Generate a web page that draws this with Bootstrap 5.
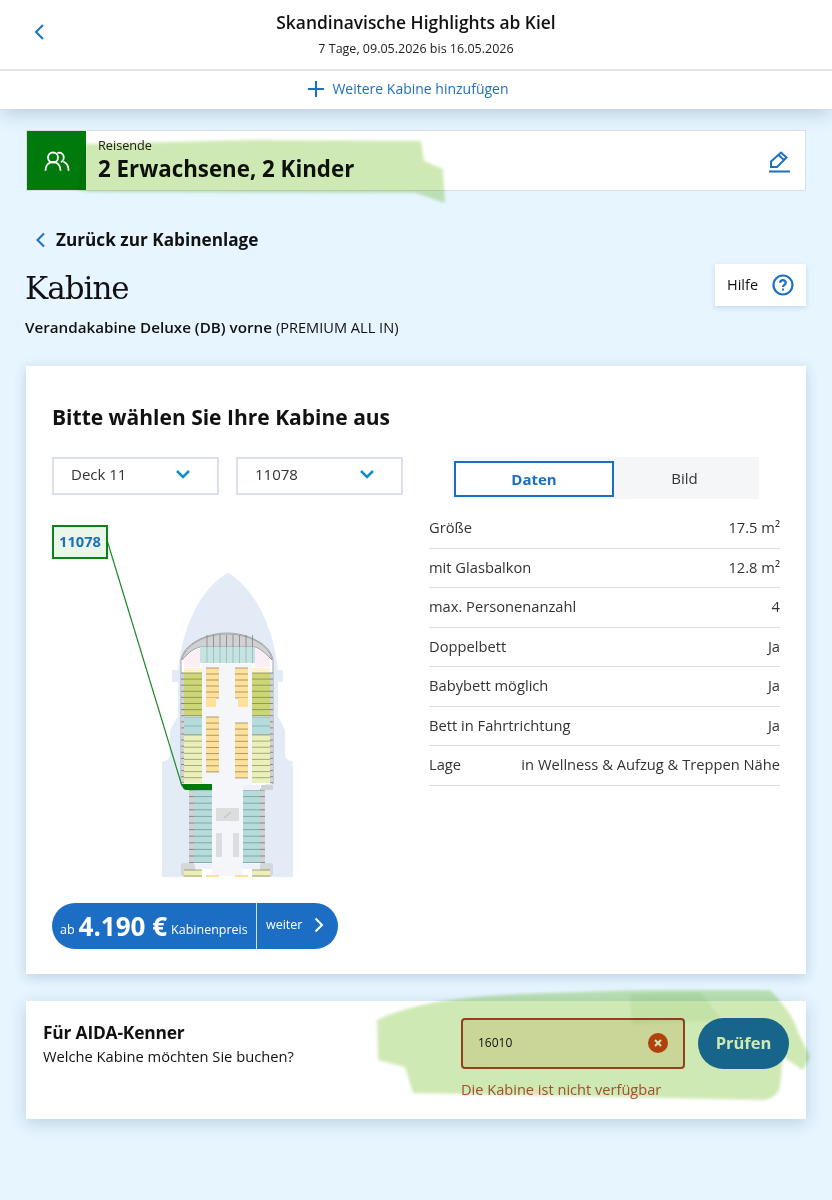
<!DOCTYPE html>
<html lang="de">
<head>
  <meta charset="UTF-8">
  <meta name="viewport" content="width=device-width, initial-scale=1">
  <title>Kabine</title>
  <link href="https://cdn.jsdelivr.net/npm/bootstrap@5.3.3/dist/css/bootstrap.min.css" rel="stylesheet">
  <style>
    body { font-family: "Open Sans", "Liberation Sans", sans-serif; background: #e6f5ff; color: #111; width: 832px; min-height: 1200px; position: relative; overflow-x: hidden; }
    .top-shell { background: #fff; box-shadow: 0 4px 18px rgba(20, 60, 100, .22); position: relative; }
    .top-head { height: 71px; padding-top: 11px; border-bottom: 2px solid #e3e4ea; position: relative; }
    .top-title { font-size: 17.4px; font-weight: 600; line-height: 22px; }
    .top-sub { font-size: 12.5px; line-height: 16px; margin-top: 8px; color: #222; }
    .top-back { position: absolute; left: 33px; top: 23px; }
    .top-add { height: 38px; color: #1d6fc0; font-size: 14px; gap: 7px; padding: 0 16px 3px 0; }
    .page-wrap { padding: 21px 26px 0; }
    .trav-box { height: 61px; background: #fff; border: 1px solid #d8dde8; }
    .trav-icon { width: 59px; background: #007a0c; }
    .trav-text { padding: 7px 0 0 12px; }
    .trav-small { font-size: 12.7px; line-height: 14px; color: #222; }
    .trav-big { font-size: 22.3px; font-weight: 700; line-height: 28px; margin-top: 3px; }
    .trav-edit { padding: 2px 15px 0 0; }
    .back-row { margin-top: 37px; font-size: 17.2px; font-weight: 700; line-height: 24px; padding-left: 9px; gap: 10px; }
    .head-row { margin-top: 12px; height: 68px; }
    .page-title { font-family: "DejaVu Serif", "Liberation Serif", serif; font-size: 31px; font-weight: 400; line-height: 44px; margin: 2px 0 0 -1px; letter-spacing: -1px; }
    .sub-title { font-size: 15.2px; line-height: 20px; margin-top: 7px; margin-left: -1px; white-space: nowrap; }
    .sub-tariff { font-size: 14.6px; }
    .help-btn { width: 91px; height: 42px; background: #fff; box-shadow: 0 2px 5px rgba(20, 60, 100, .15); font-size: 14.500px; gap: 14px; padding-left: 12px; }
    .main-panel { margin-top: 34px; height: 608px; background: #fff; box-shadow: 0 3px 12px rgba(20, 60, 100, .2); border-radius: 0; padding: 37px 26px 0; border: 0; }
    .panel-title { font-size: 21px; font-weight: 700; line-height: 28px; margin: 0 0 26px; }
    .left-side { width: 351px; }
    .right-side { width: 351px; margin-left: 26px; }
    .pick-box { width: 167px; height: 38px; border: 2px solid #dcdfec; padding: 0 27px 3px 17px; font-size: 15px; color: #333; }
    .plan-area { position: relative; height: 370px; margin-top: 30px; }
    .plan-svg { position: absolute; left: -52px; top: -525px; width: 832px; height: 1200px; overflow: visible; pointer-events: none; }
    .plan-tag { position: absolute; left: 0; top: 0; width: 56px; height: 34px; padding-bottom: 2px; background: #eaf6ea; border: 2px solid #0a8416; color: #1d6fc0; font-size: 14.700px; font-weight: 700; }
    .price-pill { width: 286px; height: 46px; margin-top: 8px; background: #1c6ec4; color: #fff; border-radius: 23px; }
    .price-main { width: 205px; padding-left: 8px; gap: 4px; border-right: 1px solid #cfe2f5; height: 100%; font-size: 12.500px; }
    .price-val { font-size: 26px; font-weight: 700; line-height: 30px; }
    .price-next { flex: 1; font-size: 12.500px; padding-left: 9px; gap: 12px; padding-bottom: 2px; }
    .tab-wrap { width: 307px; height: 42px; margin-left: 23px; background: #f4f6f8; font-size: 15px; }
    .tab-on { width: 160px; margin: 4px 0 0 2px; height: 36px; border: 2px solid #1c6ec4; background: #fff; color: #1c6ec4; font-weight: 700; }
    .tab-off { flex: 1; color: #333; padding-right: 4px; }
    .facts { margin-top: 10px; font-size: 14.700px; color: #333; }
    .facts .list-group-item { height: 39.500px; padding: 0 0 2px; background: transparent; border-color: #dadde4; border-width: 0 0 1px; color: #333; border-radius: 0; }
    .kenner-box { margin-top: 27px; height: 118px; background: #fff; box-shadow: 0 4px 16px rgba(20, 60, 100, .2); padding: 17px 17px 0; }
    .ken-title { font-size: 17.400px; font-weight: 700; line-height: 24px; margin-top: 2px; letter-spacing: -.2px; }
    .ken-sub { font-size: 14.700px; line-height: 20px; margin-top: 2px; }
    .ken-form { width: 224px; }
    .ken-input { height: 51px; border: 2px solid #b8452c; border-radius: 4px; padding: 0 15px 1px; font-size: 12px; background: #f9e9d8; }
    .ken-clear { width: 20px; height: 20px; border-radius: 50%; background: #dd4511; }
    .ken-error { color: #c8563f; font-size: 14.600px; line-height: 20px; margin-top: 10px; white-space: nowrap; }
    .ken-btn { width: 91px; height: 51px; margin-left: 13px; background: #1c6ec4; color: #fff; border: 0; border-radius: 26px; font-size: 16.500px; font-weight: 700; padding: 0; }
    .marker-layer { position: absolute; left: 0; top: 0; width: 832px; height: 1200px; pointer-events: none; mix-blend-mode: multiply; }
    .marker-soft { filter: blur(1.500px); }
  </style>
</head>
<body>

  <div class="top-shell">
    <div class="top-head text-center">
      <svg class="top-back" width="12" height="18" viewBox="0 0 12 18" fill="none" stroke="#1d6fc0" stroke-width="2"><path d="M10 2 3 9l7 7"/></svg>
      <div class="top-title">Skandinavische Highlights ab Kiel</div>
      <div class="top-sub">7 Tage, 09.05.2026 bis 16.05.2026</div>
    </div>
    <div class="top-add d-flex align-items-center justify-content-center">
      <svg width="18" height="18" viewBox="0 0 18 18" stroke="#1d6fc0" stroke-width="2"><path d="M9 1v16M1 9h16"/></svg>
      <span>Weitere Kabine hinzufügen</span>
    </div>
  </div>

  <div class="page-wrap">
    <div class="trav-box d-flex">
      <div class="trav-icon d-flex align-items-center justify-content-center">
        <svg width="26" height="20" viewBox="0 0 26 20" fill="none" stroke="#fff" stroke-width="1.800" stroke-linecap="round"><circle cx="9" cy="6.500" r="5"/><path d="M1.500 19c0-5 3.500-8 7.500-8s7.500 3 7.500 8M14 1.800c3-.8 5.800 1.500 5.800 4.700 0 2-1 3.500-2.300 4.300M20 11c3 1.500 4.500 4 4.500 8"/></svg>
      </div>
      <div class="trav-text flex-grow-1">
        <div class="trav-small">Reisende</div>
        <div class="trav-big">2 Erwachsene, 2 Kinder</div>
      </div>
      <div class="trav-edit d-flex align-items-center">
        <svg width="22" height="23" viewBox="0 0 22 23" fill="none" stroke="#1d6fc0" stroke-width="2"><path d="M3 11.500 13 2.500l5.500 5L9 17H3zM10.500 5l5.500 5"/><path d="M1 21.500h21"/></svg>
      </div>
    </div>

    <div class="back-row d-flex align-items-center">
      <svg width="11" height="16" viewBox="0 0 11 16" fill="none" stroke="#1d6fc0" stroke-width="2"><path d="M9 1.500 2.500 8 9 14.500"/></svg>
      <span>Zurück zur Kabinenlage</span>
    </div>

    <div class="head-row d-flex justify-content-between">
      <div>
        <h1 class="page-title">Kabine</h1>
        <div class="sub-title"><span class="fw-semibold">Verandakabine Deluxe (DB) vorne</span> <span class="sub-tariff">(PREMIUM ALL IN)</span></div>
      </div>
      <div class="help-btn d-flex align-items-center">
        <span>Hilfe</span>
        <svg width="22" height="22" viewBox="0 0 22 22" fill="none" stroke="#1d6fc0" stroke-width="2.200"><circle cx="11" cy="11" r="9.500"/><path d="M8.200 8.800c0-3.500 5.600-3.500 5.600 0 0 2-2.800 2.200-2.800 4.200"/><path d="M11 14.500v2"/></svg>
      </div>
    </div>

    <div class="card main-panel">
      <h2 class="panel-title">Bitte wählen Sie Ihre Kabine aus</h2>
      <div class="d-flex">
        <div class="left-side">
          <div class="d-flex justify-content-between">
            <div class="pick-box d-flex align-items-center justify-content-between"><span>Deck 11</span><svg width="14" height="9" viewBox="0 0 14 9" fill="none" stroke="#0f8fc4" stroke-width="2.500"><path d="M1 1l6 6 6-6"/></svg></div>
            <div class="pick-box d-flex align-items-center justify-content-between"><span>11078</span><svg width="14" height="9" viewBox="0 0 14 9" fill="none" stroke="#0f8fc4" stroke-width="2.500"><path d="M1 1l6 6 6-6"/></svg></div>
          </div>
          <div class="plan-area">
            <svg class="plan-svg" id="deckplan" viewBox="0 0 832 1200"></svg>
            <div class="plan-tag d-flex align-items-center justify-content-center">11078</div>
          </div>
          <div class="price-pill d-flex align-items-center">
            <div class="price-main d-flex align-items-center"><span class="mt-2">ab</span><span class="price-val">4.190 €</span><span class="mt-2">Kabinenpreis</span></div>
            <div class="price-next d-flex align-items-center"><span>weiter</span><svg width="10" height="16" viewBox="0 0 10 16" fill="none" stroke="#fff" stroke-width="2"><path d="M1.500 1.500 8 8l-6.500 6.500"/></svg></div>
          </div>
        </div>
        <div class="right-side">
          <div class="tab-wrap d-flex">
            <div class="tab-on d-flex align-items-center justify-content-center">Daten</div>
            <div class="tab-off d-flex align-items-center justify-content-center">Bild</div>
          </div>
          <ul class="list-group facts">
            <li class="list-group-item d-flex justify-content-between align-items-center"><span>Größe</span><span>17.5 m²</span></li>
            <li class="list-group-item d-flex justify-content-between align-items-center"><span>mit Glasbalkon</span><span>12.8 m²</span></li>
            <li class="list-group-item d-flex justify-content-between align-items-center"><span>max. Personenanzahl</span><span>4</span></li>
            <li class="list-group-item d-flex justify-content-between align-items-center"><span>Doppelbett</span><span>Ja</span></li>
            <li class="list-group-item d-flex justify-content-between align-items-center"><span>Babybett möglich</span><span>Ja</span></li>
            <li class="list-group-item d-flex justify-content-between align-items-center"><span>Bett in Fahrtrichtung</span><span>Ja</span></li>
            <li class="list-group-item d-flex justify-content-between align-items-center"><span>Lage</span><span>in Wellness &amp; Aufzug &amp; Treppen Nähe</span></li>
          </ul>
        </div>
      </div>
    </div>

    <div class="kenner-box d-flex justify-content-between">
      <div>
        <div class="ken-title">Für AIDA-Kenner</div>
        <div class="ken-sub">Welche Kabine möchten Sie buchen?</div>
      </div>
      <div class="d-flex align-items-start">
        <div class="ken-form">
          <div class="ken-input d-flex align-items-center justify-content-between">
            <span>16010</span>
            <span class="ken-clear d-flex align-items-center justify-content-center"><svg width="8" height="8" viewBox="0 0 8 8" stroke="#fff" stroke-width="2"><path d="M1 1l6 6M7 1 1 7"/></svg></span>
          </div>
          <div class="ken-error">Die Kabine ist nicht verfügbar</div>
        </div>
        <button class="ken-btn" type="button">Prüfen</button>
      </div>
    </div>
  </div>

  <svg class="marker-layer" viewBox="0 0 832 1200">
    <g class="marker-soft">
      <path fill="#cfe9b4" d="M85 144 250 140 421 141 424 161 443 169 445 203 416 193 90 192 78 190Z"/>
      <path fill="#cfe9b4" d="M377 1020C410 1005 450 997 520 994L637 990 770 990C785 1005 795 1020 797 1030L810 1057 803 1070 783 1057 780 1087C778 1095 770 1100 763 1100L413 1093 405 1067 378 1060Z"/>
      <path fill="#c3e2a6" d="M630 994 700 992 722 1020 632 1024Z"/>
    </g>
  </svg>

  <script>
    // Deckplan: Kabinenreihen werden aus Daten erzeugt
    const plan = document.getElementById('deckplan');
    let out = '';
    const rect = (x, y, w, h, fill, extra = '') => { out += `<rect x="${x}" y="${y}" width="${w}" height="${h}" fill="${fill}" ${extra}/>`; };
    const line = (x1, y1, x2, y2, col = '#6c6c5c', sw = .7) => { out += `<line x1="${x1}" y1="${y1}" x2="${x2}" y2="${y2}" stroke="${col}" stroke-width="${sw}"/>`; };
    const rows = (x, w, y0, y1, step, fill, col = '#8a7a55') => {
      rect(x, y0, w, y1 - y0, fill);
      for (let y = y0; y <= y1 + .01; y += step) line(x, y, x + w, y, col);
    };

    // Schiffsrumpf
    out += '<path fill="#e3ecf6" d="M228 573C205 585 183 620 178 670H172V682H178V716L170 730V754Q170 760 162 762V877H293V762Q285 760 285 754V730L278 716V682H283V670H278C273 620 250 585 228 573Z"/>';
    out += '<path fill="#fff" d="M181 784V660C183 645 205 633 227 633S271 645 273 660V784H265V863L273 868V877H181V868L189 863V784Z"/>';
    out += '<path fill="none" stroke="#a3a6aa" stroke-width="1" d="M181 784V660C183 645 205 633 227 633S271 645 273 660V784"/>';
    // Bug
    out += '<path fill="#cfd1d3" stroke="#8f9296" stroke-width=".8" d="M182 660C184 645 205 634 227 634S270 645 272 660L268 656C263 651 258 648 255 647H200C196 648 190 651 186 656Z"/>';
    for (let x = 207; x < 255; x += 6.5) line(x, 635, x, 663, '#777', .7);
    rect(200, 647, 55, 16, '#c5e3e1');
    for (let x = 207; x < 255; x += 6.5) line(x, 647, x, 663, '#8aa', .6);
    out += '<path fill="#fbeef4" d="M184 667V660Q190 652 200 648V667Z"/><path fill="#fbeef4" d="M270 667V660Q264 652 255 648V667Z"/>';
    rect(184, 668, 18, 5, '#fdf1d0');
    rect(252, 668, 18, 5, '#fdf1d0');
    // Gang
    rect(202, 664, 50, 122, '#f5f6fa');
    rect(212, 786, 31, 90, '#f5f6fa');
    // Seitenkabinen vorne
    rows(181, 3, 673, 783, 6.100, '#d0d2d4', '#666');
    rows(270, 3, 673, 783, 6.100, '#d0d2d4', '#666');
    [[184, 202], [252, 270]].forEach(([a, b]) => {
      rows(a, b - a, 673, 716, 6.100, '#cdd674', '#7c7c50');
      rows(a, b - a, 717, 735, 9, '#b5dcdb', '#7fa8a8');
      rows(a, b - a, 735, 783, 6.100, '#ebf0bb', '#8a8a62');
    });
    // Mittelkabinen
    rows(206, 13, 668, 698, 6, '#fde09a');
    rect(206, 698, 10, 9, '#fde09a');
    rows(206, 13, 717, 772, 6.100, '#fde09a');
    rows(235, 13, 668, 698, 6, '#fde09a');
    rect(238, 698, 10, 9, '#fde09a');
    rows(235, 13, 723, 778, 6.100, '#fde09a');
    // Heckteil
    [[194, 189], [243, 260]].forEach(([x, g]) => {
      rows(x, 18, 790, 863, 6.600, '#b5dcdb', '#6f8f8f');
      rows(g, 5, 790, 863, 6.600, '#cfd1d3', '#666');
    });
    rect(243, 785, 17, 5, '#eef0fa');
    rect(261, 785, 12, 5, '#d0d2d4');
    rect(195, 864, 17, 5, '#eef0fa');
    rect(243, 864, 17, 5, '#eef0fa');
    rect(181, 863, 14, 14, '#d5d7d8', 'rx="3"');
    rect(260, 863, 13, 14, '#d5d7d8', 'rx="3"');
    rows(184, 18, 870, 877, 6, '#ebf0bb');
    rows(252, 18, 870, 877, 6, '#ebf0bb');
    rect(206, 875, 13, 2, '#fde09a');
    rect(235, 875, 13, 2, '#fde09a');
    // Treppe und Aufzuege
    rect(216, 808, 23, 13, '#dcdddf');
    line(224, 818, 231, 812, '#aaa', .8);
    rect(216, 833, 6, 24, '#dcdddf');
    rect(233, 833, 6, 24, '#dcdddf');
    // gewaehlte Kabine und Verbindungslinie
    out += '<path fill="#007a0c" d="M182 784H212V790H187C184 790 182 788 182 784Z"/>';
    line(107, 540, 182, 786, '#1b8a24', 1.200);
    plan.innerHTML = out;
  </script>

  <script src="https://cdn.jsdelivr.net/npm/bootstrap@5.3.3/dist/js/bootstrap.bundle.min.js"></script>
</body>
</html>
